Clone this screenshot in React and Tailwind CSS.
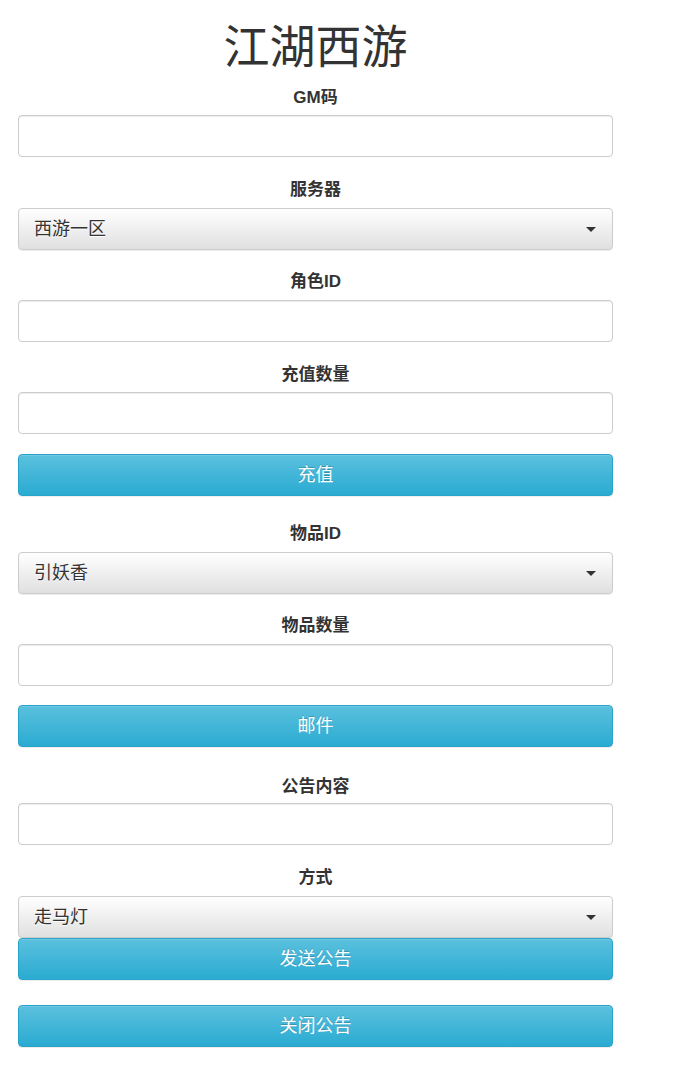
import React from "react";

const FONT = { fontFamily: '"Helvetica Neue", "Liberation Sans", Arial, "Noto Sans CJK SC", sans-serif' };

function Label({ text, className }) {
  return (
    <div className={"h-[20px] leading-[20px] text-center text-[17px] font-bold text-[#333] " + className}>
      {text}
    </div>
  );
}

function Input({ className }) {
  return (
    <input
      type="text"
      className={"block w-full h-[42px] rounded-[4px] border border-[#ccc] bg-white px-3 shadow-[inset_0_1px_1px_rgba(0,0,0,0.075)] outline-none " + className}
    />
  );
}

function Select({ text, className }) {
  return (
    <div
      className={"flex h-[42px] w-full items-center justify-between rounded-[4px] border border-[#ccc] bg-[linear-gradient(to_bottom,#ffffff_0%,#e0e0e0_100%)] pl-[15px] pr-[16px] text-[18px] text-[#333] shadow-[inset_0_1px_0_rgba(255,255,255,0.15),0_1px_1px_rgba(0,0,0,0.075)] [text-shadow:0_1px_0_#fff] " + className}
    >
      <span>{text}</span>
      <span className="h-0 w-0 border-x-[5px] border-t-[5px] border-x-transparent border-t-[#333]" />
    </div>
  );
}

function Button({ text, className }) {
  return (
    <button
      className={"flex h-[42px] w-full items-center justify-center rounded-[4px] border border-[#28a4c9] bg-[linear-gradient(to_bottom,#5bc0de_0%,#2aabd2_100%)] text-[18px] text-white shadow-[inset_0_1px_0_rgba(255,255,255,0.15),0_1px_1px_rgba(0,0,0,0.075)] [text-shadow:0_-1px_0_rgba(0,0,0,0.2)] " + className}
    >
      {text}
    </button>
  );
}

export default function App() {
  return (
    <div className="min-h-[1070px] w-[680px] bg-white" style={FONT}>
      <div className="ml-[18px] flex w-[595px] flex-col">
        <h1 className="mt-[23px] h-[48px] text-center text-[46px] leading-[48px] font-normal text-[#333]">江湖西游</h1>
        <Label text="GM码" className="mt-[17px]" />
        <Input className="mt-[7px]" />
        <Label text="服务器" className="mt-[23px]" />
        <Select text="西游一区" className="mt-[8px]" />
        <Label text="角色ID" className="mt-[22px]" />
        <Input className="mt-[8px]" />
        <Label text="充值数量" className="mt-[23px]" />
        <Input className="mt-[7px]" />
        <Button text="充值" className="mt-[20px]" />
        <Label text="物品ID" className="mt-[28px]" />
        <Select text="引妖香" className="mt-[8px]" />
        <Label text="物品数量" className="mt-[22px]" />
        <Input className="mt-[8px]" />
        <Button text="邮件" className="mt-[19px]" />
        <Label text="公告内容" className="mt-[30px]" />
        <Input className="mt-[6px]" />
        <Label text="方式" className="mt-[23px]" />
        <Select text="走马灯" className="mt-[8px]" />
        <Button text="发送公告" className="mt-0" />
        <Button text="关闭公告" className="mt-[25px]" />
      </div>
    </div>
  );
}
